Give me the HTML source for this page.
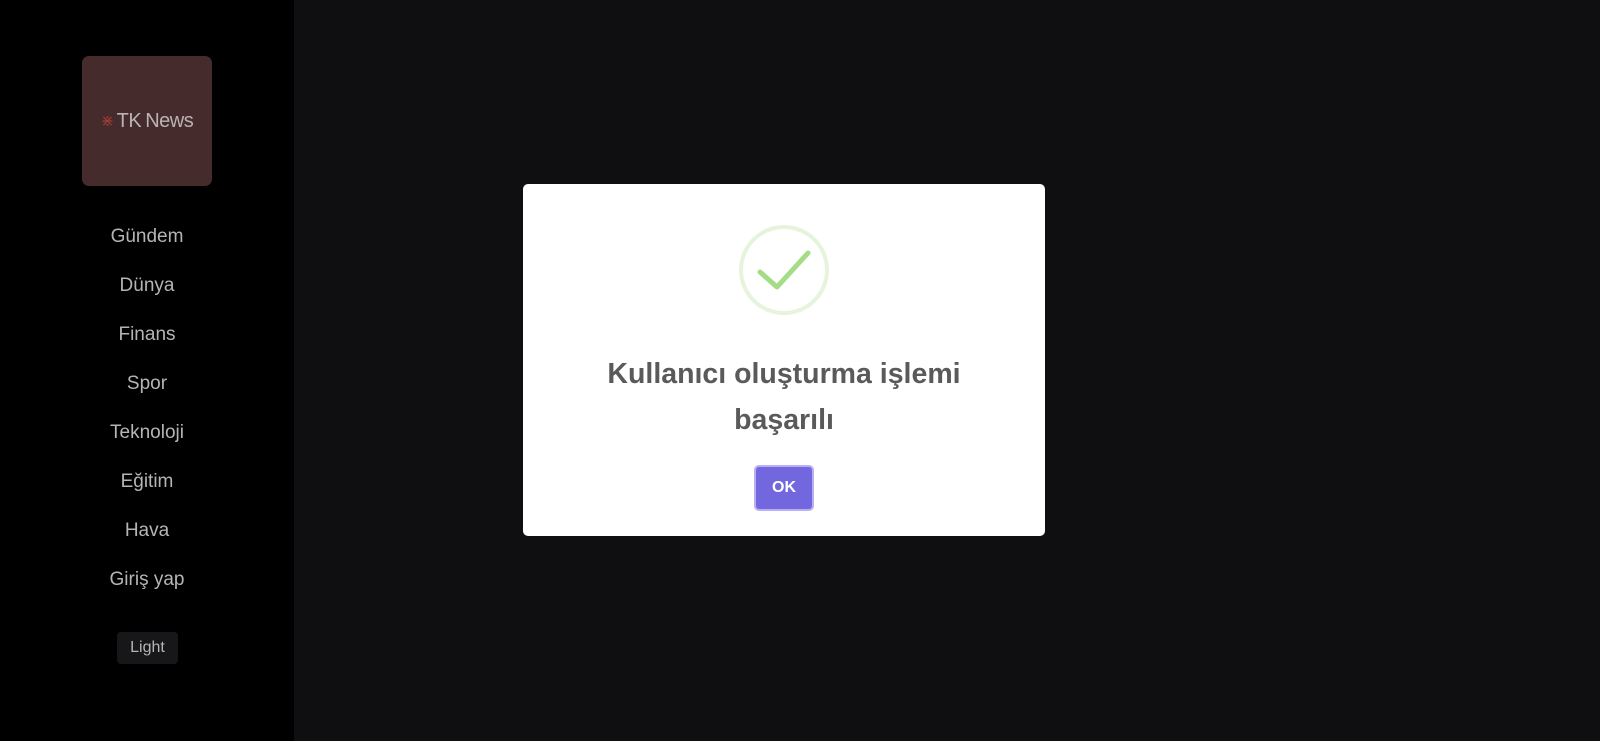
<!DOCTYPE html>
<html><head><meta charset="utf-8"><style>
body{margin:0;width:1600px;height:741px;background:#0f0f11;font-family:"Liberation Sans",sans-serif;overflow:hidden;position:relative}
.side{position:absolute;left:0;top:0;width:294px;height:741px;background:#000}
.logo{position:absolute;left:82px;top:56px;width:130px;height:130px;border-radius:7px;background:#452b2c;display:flex;align-items:center;justify-content:center;color:#b9b3b3;font-size:20px;letter-spacing:-0.5px}
.nav{position:absolute;left:0;width:294px;text-align:center;color:#b5b5b5;font-size:19px}
.light{position:absolute;left:117px;top:632px;width:61px;height:32px;background:#17171a;border-radius:4px;color:#b5b5b5;font-size:16px;text-align:center;line-height:32px}
.modal{position:absolute;left:523px;top:184px;width:522px;height:352px;background:#fff;border-radius:5px}
.title{position:absolute;left:0;width:522px;top:167px;text-align:center;font-size:28.5px;color:#5a5a5a;line-height:46px;font-family:"Liberation Sans",sans-serif;font-weight:bold}
.ok{position:absolute;left:231px;top:281px;width:56px;height:42px;background:#7367e0;border:2px solid #b7b0f1;border-radius:5px;color:#fff;font-weight:bold;font-size:16px;text-align:center;line-height:42px}
</style></head><body>
<div class="side">
<div class="logo"><span style="color:#9c3b33;font-size:16px;margin-right:3px">⋇</span>TK <span style="margin-left:4px">News</span></div>
<div class="nav" style="top:226px">Gündem</div>
<div class="nav" style="top:275px">Dünya</div>
<div class="nav" style="top:324px">Finans</div>
<div class="nav" style="top:373px">Spor</div>
<div class="nav" style="top:422px">Teknoloji</div>
<div class="nav" style="top:471px">Eğitim</div>
<div class="nav" style="top:520px">Hava</div>
<div class="nav" style="top:569px">Giriş yap</div>
<div class="light">Light</div>
</div>
<div class="modal">
<svg style="position:absolute;left:215px;top:40px" width="92" height="92" viewBox="0 0 92 92">
<circle cx="46" cy="46" r="43" fill="none" stroke="#e6f4dc" stroke-width="4"/>
<path d="M22 48 L39 63 L70 29" fill="none" stroke="#a5dc86" stroke-width="5" stroke-linecap="round" stroke-linejoin="round"/>
</svg>
<div class="title">Kullanıcı oluşturma işlemi<br>başarılı</div>
<div class="ok">OK</div>
</div>
</body></html>
